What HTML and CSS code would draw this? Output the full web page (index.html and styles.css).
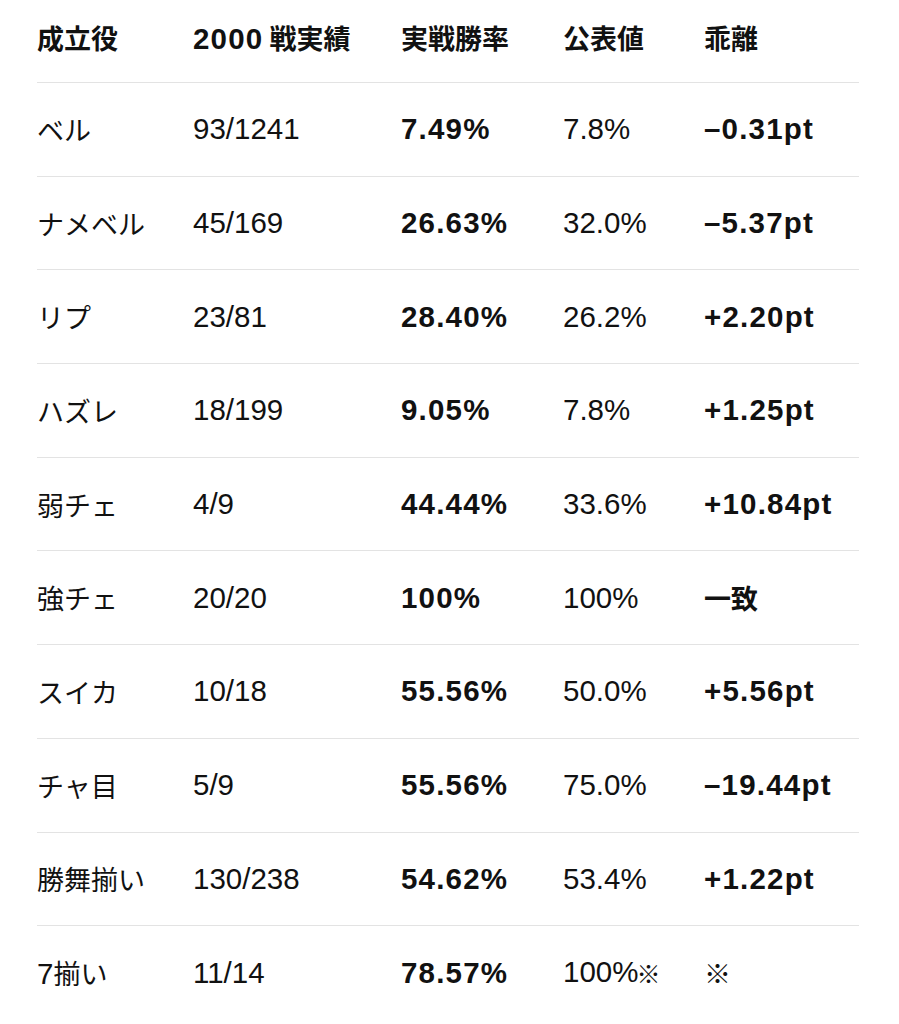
FILE: index.html
```html
<!DOCTYPE html>
<html lang="ja">
<head>
<meta charset="utf-8">
<title>成立役別 実戦勝率</title>
<link rel="stylesheet" href="styles.css">
</head>
<body>
<table class="stats">
  <thead>
    <tr><th><span class="ja">成立役</span></th><th>2000<span class="ja gap">戦実績</span></th><th><span class="ja">実戦勝率</span></th><th><span class="ja">公表値</span></th><th><span class="ja">乖離</span></th></tr>
  </thead>
  <tbody>
    <tr><td><span class="ja">ベル</span></td><td>93/1241</td><td class="b">7.49%</td><td>7.8%</td><td class="b">–0.31pt</td></tr>
    <tr><td><span class="ja">ナメベル</span></td><td>45/169</td><td class="b">26.63%</td><td>32.0%</td><td class="b">–5.37pt</td></tr>
    <tr><td><span class="ja">リプ</span></td><td>23/81</td><td class="b">28.40%</td><td>26.2%</td><td class="b">+2.20pt</td></tr>
    <tr><td><span class="ja">ハズレ</span></td><td>18/199</td><td class="b">9.05%</td><td>7.8%</td><td class="b">+1.25pt</td></tr>
    <tr><td><span class="ja">弱チェ</span></td><td>4/9</td><td class="b">44.44%</td><td>33.6%</td><td class="b">+10.84pt</td></tr>
    <tr><td><span class="ja">強チェ</span></td><td>20/20</td><td class="b">100%</td><td>100%</td><td class="b"><span class="ja">一致</span></td></tr>
    <tr><td><span class="ja">スイカ</span></td><td>10/18</td><td class="b">55.56%</td><td>50.0%</td><td class="b">+5.56pt</td></tr>
    <tr><td><span class="ja">チャ目</span></td><td>5/9</td><td class="b">55.56%</td><td>75.0%</td><td class="b">–19.44pt</td></tr>
    <tr><td><span class="ja">勝舞揃い</span></td><td>130/238</td><td class="b">54.62%</td><td>53.4%</td><td class="b">+1.22pt</td></tr>
    <tr class="last"><td>7<span class="ja">揃い</span></td><td>11/14</td><td class="b">78.57%</td><td>100%<span class="note">※</span></td><td><span class="ja">※</span></td></tr>
  </tbody>
</table>
</body>
</html>
```
FILE: styles.css
```css
html, body {
  margin: 0;
  padding: 0;
  background: #ffffff;
}
body {
  font-family: "Liberation Sans", Arial, "Noto Sans CJK JP", sans-serif;
  color: #111111;
  font-size: 29.5px;
}
.ja {
  font-family: "Noto Sans CJK JP", sans-serif;
  font-size: 27px;
  letter-spacing: 0;
}
.ja.gap { margin-left: 6px; }
.stats {
  border-collapse: collapse;
  table-layout: fixed;
  width: 822px;
  margin-left: 37px;
}
.stats th:nth-child(1), .stats td:nth-child(1) { width: 156px; }
.stats th:nth-child(2), .stats td:nth-child(2) { width: 208px; }
.stats th:nth-child(3), .stats td:nth-child(3) { width: 162px; }
.stats th:nth-child(4), .stats td:nth-child(4) { width: 141px; }
.stats th:nth-child(5), .stats td:nth-child(5) { width: 155px; }
.stats th {
  text-align: left;
  font-weight: 700;
  letter-spacing: 1.2px;
  padding: 0 0 8px 0;
  height: 74px;
  vertical-align: middle;
  border-bottom: 1px solid #e3e3e3;
  white-space: nowrap;
}
.stats td {
  padding: 0;
  height: 92.7px;
  vertical-align: middle;
  text-align: left;
  font-weight: 400;
  border-bottom: 1px solid #e3e3e3;
  white-space: nowrap;
}
.stats tr.last td { border-bottom: none; }
.stats td.b { font-weight: 700; letter-spacing: 1.2px; }
.note {
  font-family: "Noto Sans CJK JP", sans-serif;
  font-size: 24px;
  font-weight: 900;
  margin-left: -2px;
  vertical-align: -1px;
}
```
